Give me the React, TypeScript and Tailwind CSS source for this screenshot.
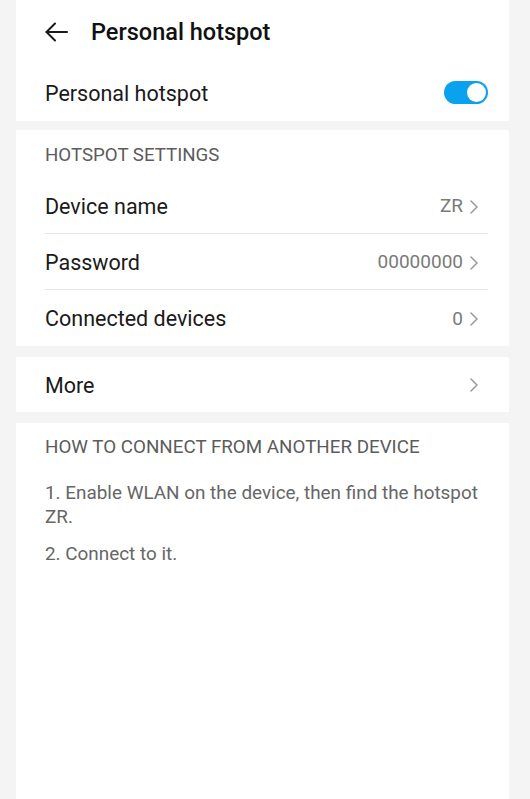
import React from 'react'

const font = { fontFamily: 'Roboto, "Noto Sans", Arial, sans-serif' }

function BackIcon() {
  return (
    <svg className="w-[26px] h-[26px]" viewBox="0 0 26 26" fill="none" stroke="#1a1a1a" strokeWidth="2" strokeLinecap="round" strokeLinejoin="round">
      <line x1="2.5" y1="13" x2="23" y2="13" />
      <polyline points="11,4.5 2.5,13 11,21.5" />
    </svg>
  )
}

function Chevron() {
  return (
    <svg className="w-[10px] h-[16px] ml-[6px] mr-[9px]" viewBox="0 0 10 16" fill="none" stroke="#9a9a9a" strokeWidth="1.5" strokeLinecap="round" strokeLinejoin="round">
      <polyline points="2,2 8,8 2,14" />
    </svg>
  )
}

function Toggle() {
  return (
    <div className="w-[44px] h-[23px] rounded-full bg-[#0aa2ee] p-[2px] flex justify-end">
      <div className="w-[19px] h-[19px] rounded-full bg-white" />
    </div>
  )
}

function Row({ label, value, divider }: { label: string; value?: string; divider?: boolean }) {
  return (
    <div className={`h-[56px] flex items-center justify-between ${divider ? 'border-b border-[#e6e6e6]' : ''}`}>
      <span className="text-[21.5px] text-[#1a1a1a] pt-[3px]">{label}</span>
      <span className="flex items-center text-[19px] text-[#7a7a7a] pt-[2px]">
        {value}
        <Chevron />
      </span>
    </div>
  )
}

export default function App() {
  return (
    <div className="min-h-[799px] bg-[#f4f4f4] pl-[16px] pr-[21px] flex flex-col" style={font}>
      {/* top panel */}
      <div className="bg-white pl-[29px] pr-[21px] rounded-b-[2px]">
        <div className="h-[64px] flex items-center gap-[21px]">
          <span className="-ml-[1px]"><BackIcon /></span>
          <span className="text-[23.5px] font-medium text-[#111] pt-[2px]">Personal hotspot</span>
        </div>
        <div className="h-[57px] flex items-center justify-between">
          <span className="text-[21.5px] text-[#1a1a1a] pt-[3px]">Personal hotspot</span>
          <Toggle />
        </div>
      </div>

      {/* hotspot settings */}
      <div className="bg-white pl-[29px] pr-[21px] mt-[9px] rounded-[2px]">
        <div className="h-[48px] flex items-center pt-[3px]">
          <span className="text-[18.7px] text-[#5c5c5c]">HOTSPOT SETTINGS</span>
        </div>
        <Row label="Device name" value="ZR" divider />
        <Row label="Password" value="00000000" divider />
        <Row label="Connected devices" value="0" />
      </div>

      {/* more */}
      <div className="bg-white pl-[29px] pr-[21px] mt-[11px] rounded-[2px]">
        <div className="h-[55px] flex items-center justify-between">
          <span className="text-[21.5px] text-[#1a1a1a] pt-[3px]">More</span>
          <Chevron />
        </div>
      </div>

      {/* how to connect */}
      <div className="bg-white pl-[29px] pr-[21px] mt-[11px] flex-1 rounded-t-[2px]">
        <div className="h-[48px] flex items-center pt-[1px]">
          <span className="text-[18.8px] text-[#5c5c5c]">HOW TO CONNECT FROM ANOTHER DEVICE</span>
        </div>
        <p className="text-[18.9px] leading-[24px] text-[#666] mt-[10px]">
          1. Enable WLAN on the device, then find the hotspot ZR.
        </p>
        <p className="text-[18.9px] leading-[24px] text-[#666] mt-[13px]">2. Connect to it.</p>
      </div>
    </div>
  )
}
